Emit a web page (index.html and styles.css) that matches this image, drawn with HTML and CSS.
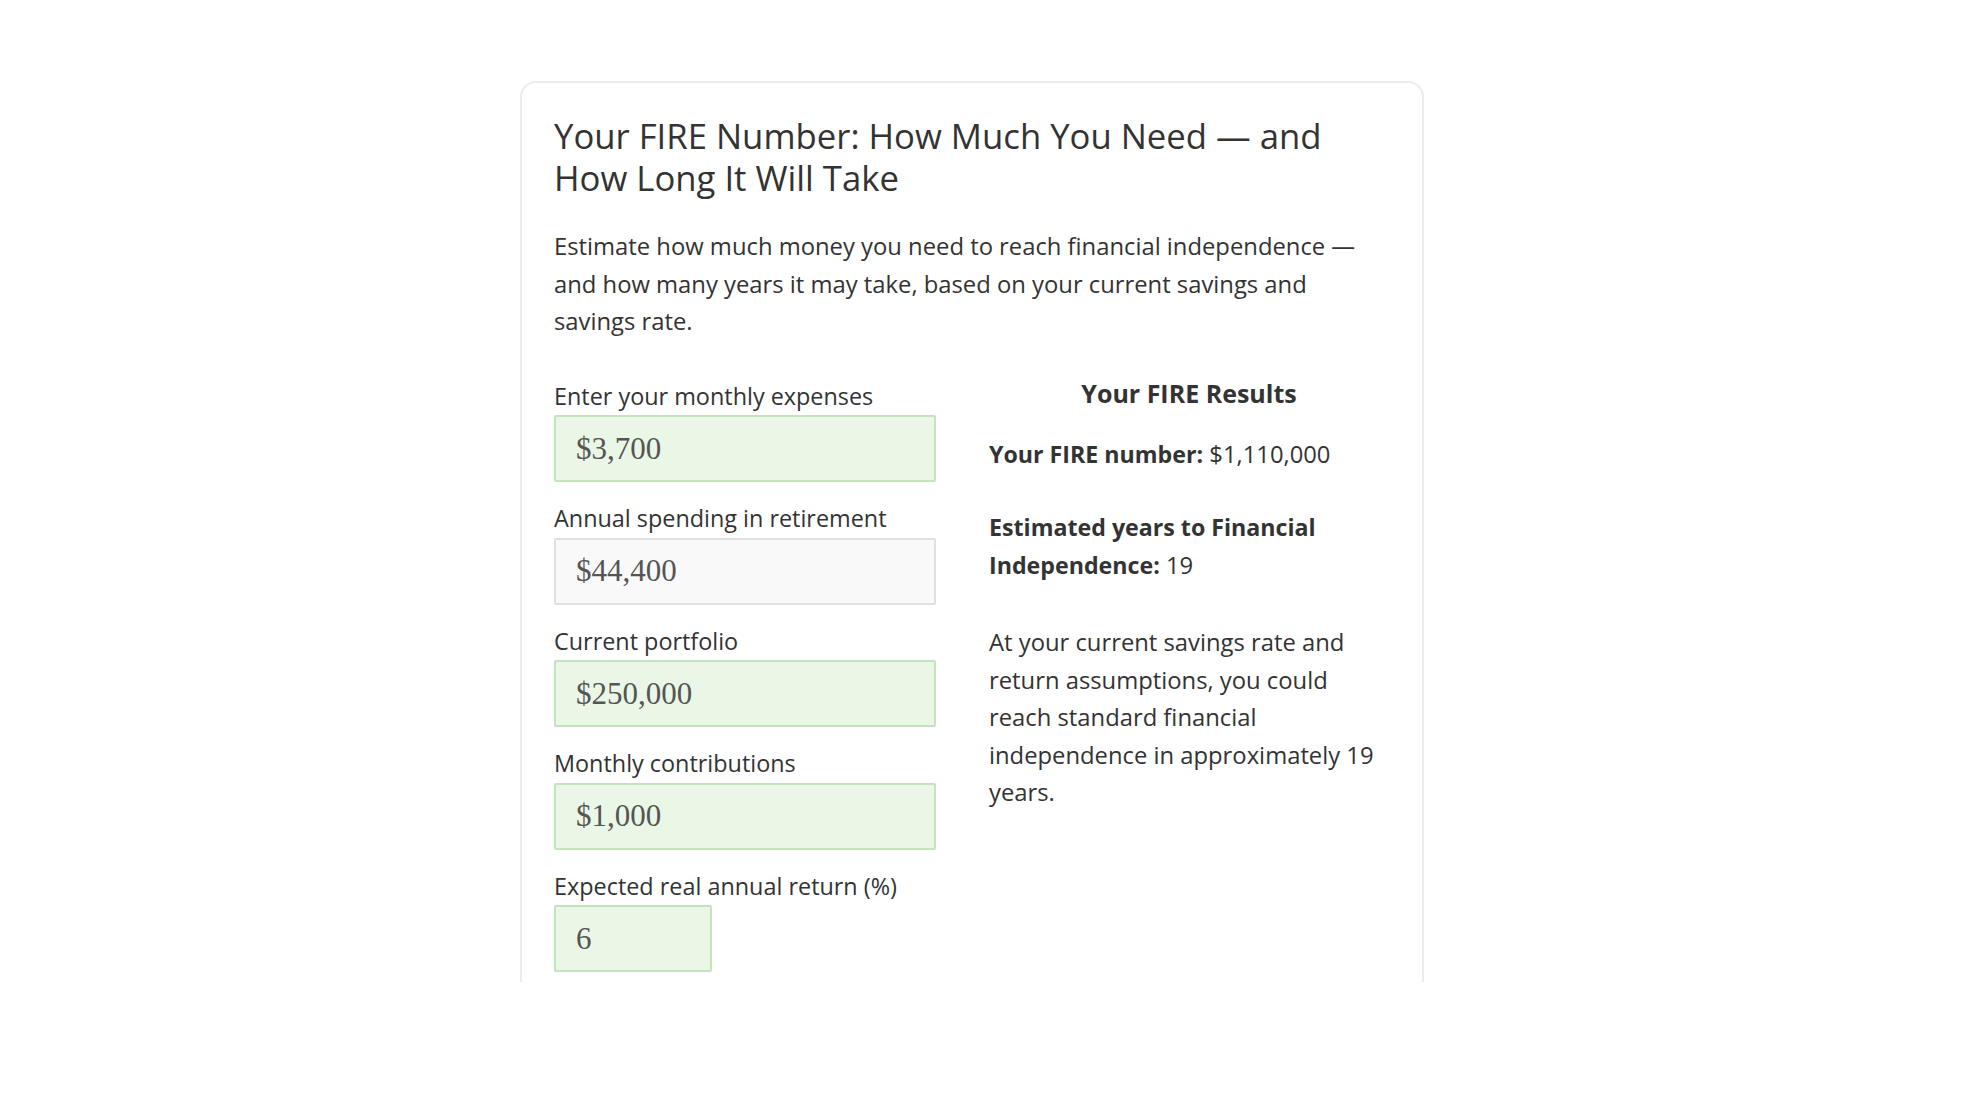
FILE: index.html
```html
<!DOCTYPE html>
<html lang="en">
<head>
<meta charset="utf-8">
<title>FIRE Number Calculator</title>
<link rel="stylesheet" href="styles.css">
</head>
<body>
<section class="fire-card">
  <h2 class="fire-title">Your FIRE Number: How Much You Need — and How Long It Will Take</h2>
  <p class="fire-intro">Estimate how much money you need to reach financial independence — and how many years it may take, based on your current savings and savings rate.</p>

  <div class="fire-grid">
    <form class="fire-form">
      <label class="field">
        <span class="field-label">Enter your monthly expenses</span>
        <input class="field-input is-edited" type="text" value="$3,700">
      </label>
      <label class="field">
        <span class="field-label">Annual spending in retirement</span>
        <input class="field-input is-derived" type="text" value="$44,400" readonly>
      </label>
      <label class="field">
        <span class="field-label">Current portfolio</span>
        <input class="field-input is-edited" type="text" value="$250,000">
      </label>
      <label class="field">
        <span class="field-label">Monthly contributions</span>
        <input class="field-input is-edited" type="text" value="$1,000">
      </label>
      <label class="field">
        <span class="field-label">Expected real annual return (%)</span>
        <input class="field-input field-input--short is-edited" type="text" value="6">
      </label>
    </form>

    <div class="fire-results">
      <h3 class="results-title">Your FIRE Results</h3>
      <p class="result-line"><strong>Your FIRE number:</strong> $1,110,000</p>
      <p class="result-line result-line--years"><strong>Estimated years to Financial Independence:</strong> 19</p>
      <p class="result-note">At your current savings rate and return assumptions, you could reach standard financial independence in approximately 19 years.</p>
    </div>
  </div>
</section>
</body>
</html>
```

FILE: styles.css
```css
* {
  box-sizing: border-box;
}

body {
  margin: 0;
  background: #ffffff;
  color: #333333;
  font-family: "Open Sans", "Noto Sans", sans-serif;
  font-size: 23.8px;
  line-height: 37.5px;
}

.fire-card {
  width: 904px;
  margin: 81px 0 0 520px;
  padding: 32px 33px 10px 32px;
  border: 2px solid #ececec;
  border-bottom: none;
  border-radius: 16px 16px 0 0;
  background: #ffffff;
}

.fire-title {
  margin: 0;
  padding-right: 40px;
  font-size: 34.7px;
  font-weight: 400;
  line-height: 42px;
  color: #333333;
}

.fire-intro {
  margin: 29px 0 0;
}

.fire-grid {
  display: grid;
  grid-template-columns: 382px 1fr;
  column-gap: 53px;
  margin-top: 37px;
}

.fire-form {
  display: flex;
  flex-direction: column;
  gap: 18px;
}

.field {
  display: flex;
  flex-direction: column;
}

.field-label {
  display: block;
  font-size: 23.4px;
}

.field-input {
  display: block;
  width: 100%;
  height: 67px;
  margin: 0;
  padding: 0 20px;
  border: 2px solid #dddddd;
  border-radius: 2px;
  background: #f9f9f9;
  color: #555555;
  font-family: "Liberation Serif", "Times New Roman", serif;
  font-size: 31px;
  outline: none;
}

.field-input.is-edited {
  background: #eaf7e6;
  border-color: #c4e4be;
}

.field-input.is-derived {
  background: #f9f9f9;
  border-color: #e0e0e0;
}

.field-input--short {
  width: 158px;
}

.fire-results {
  display: flex;
  flex-direction: column;
}

.results-title {
  margin: 0;
  font-size: 25px;
  font-weight: 700;
  line-height: 30px;
  text-align: center;
}

.result-line {
  margin: 28px 0 0;
}

.result-line strong {
  font-weight: 700;
  font-size: 23.2px;
}

.result-line--years {
  margin-top: 36px;
}

.result-note {
  margin: 40px 0 0;
}
```
